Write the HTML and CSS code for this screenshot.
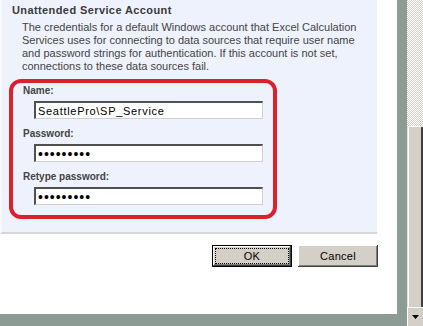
FILE: index.html
```html
<!DOCTYPE html>
<html lang="en">

<head>
    <meta charset="UTF-8">
    <title>Unattended Service Account</title>
    <link rel="stylesheet" href="styles.css">
</head>

<body>
    <div class="screen">
        <div class="frame">
            <div class="dialog">
                <div class="panel">
                    <h3>Unattended Service Account</h3>
                    <p class="desc">The credentials for a default Windows account that Excel Calculation<br>
                        Services uses for connecting to data sources that require user name<br>
                        and password strings for authentication. If this account is not set,<br>
                        connections to these data sources fail.</p>
                    <div class="highlight">
                        <label class="field">
                            <span>Name:</span>
                            <input type="text" value="SeattlePro\SP_Service">
                        </label>
                        <label class="field">
                            <span>Password:</span>
                            <input type="password" value="123456789">
                        </label>
                        <label class="field">
                            <span>Retype password:</span>
                            <input type="password" value="123456789">
                        </label>
                    </div>
                </div>
                <div class="buttons">
                    <button class="default"><span>OK</span></button>
                    <button><span>Cancel</span></button>
                </div>
            </div>
        </div>
        <div class="scrollbar">
            <div class="track"></div>
            <div class="thumb"></div>
            <div class="arrow">
                <svg width="7" height="4" viewBox="0 0 7 4">
                    <path d="M0 0h7L3.5 4z" fill="#000" />
                </svg>
            </div>
        </div>
    </div>
</body>

</html>
```

FILE: styles.css
```css
:root {
    --panel: #eef2fd;
    --face: #d4d0c8;
    --frame: #8d9b95;
    --text: #444;
    --red: #de1f2c;
    --font: Tahoma, "Liberation Sans", sans-serif;
}

* {
    box-sizing: border-box;
}

body {
    margin: 0;
    font-family: var(--font);
    font-size: 11px;
    color: var(--text);
}

.screen {
    display: flex;
    width: 423px;
    height: 326px;
    overflow: hidden;
}

.frame {
    background-color: var(--frame);
    padding: 0 10px 12px 0;
}

.dialog {
    width: 397px;
    height: 314px;
    background-color: #fff;
}

.panel {
    width: 377px;
    height: 234px;
    background-color: var(--panel);
    border-left: 2px solid #f7f9ff;
    border-bottom: 2px solid #d6d6d6;
    padding: 4px 0 0 10px;
}

h3 {
    margin: 0;
    font-size: 11px;
    font-weight: bold;
    line-height: 13px;
    letter-spacing: 0.4px;
    color: #3a3a3a;
}

.desc {
    margin: 4px 0 0 10px;
    line-height: 13px;
    white-space: nowrap;
}

.highlight {
    margin: 6px 0 0 -3px;
    width: 268px;
    height: 140px;
    border: 4px solid var(--red);
    border-radius: 12px;
    padding: 2px 0 0 10px;
}

.field {
    display: flex;
    flex-direction: column;
    gap: 4px;
    font-size: 10px;
    font-weight: bold;
    line-height: 12px;
    margin-bottom: 9px;
}

.field input {
    margin-left: 11px;
    width: 229px;
    height: 18px;
    border: none;
    border-top: 2px solid #505050;
    border-left: 2px solid #505050;
    border-right: 1px solid #d0d0d0;
    border-bottom: 1px solid #d0d0d0;
    background-color: #fff;
    font-family: var(--font);
    font-size: 11px;
    line-height: 14px;
    letter-spacing: 0.7px;
    color: #000;
    padding: 0 2px;
    outline: none;
}

.field input[type=password] {
    font-size: 14px;
    letter-spacing: 1px;
}

.buttons {
    display: flex;
    justify-content: flex-end;
    gap: 6px;
    padding: 11px 19px 0 0;
}

button {
    width: 80px;
    height: 22px;
    border: none;
    background-color: var(--face);
    font-family: var(--font);
    font-size: 11px;
    letter-spacing: 0.3px;
    color: #000;
    padding: 3px;
    display: flex;
    box-shadow: inset -1px -1px #404040, inset 1px 1px #fff, inset -2px -2px #808080;
}

button span {
    flex: 1;
    display: flex;
    align-items: center;
    justify-content: center;
    border: 1px dotted transparent;
}

button.default {
    border: 1px solid #000;
    padding: 2px;
}

button.default span {
    border-color: #000;
}

.scrollbar {
    width: 16px;
    display: flex;
    flex-direction: column;
}

.track {
    height: 126px;
    background: repeating-conic-gradient(#fff 0 25%, var(--face) 0 50%) 0 0 / 2px 2px;
}

.thumb {
    height: 181px;
    background-color: var(--face);
    border-left: 1px solid #e4e2dc;
    box-shadow: inset 1px 1px #fff, inset -2px 0 #404040;
}

.arrow {
    flex: 1;
    background-color: var(--face);
    display: flex;
    align-items: center;
    justify-content: center;
    box-shadow: inset 1px 1px #fff, inset 0 1px #404040;
}
```
